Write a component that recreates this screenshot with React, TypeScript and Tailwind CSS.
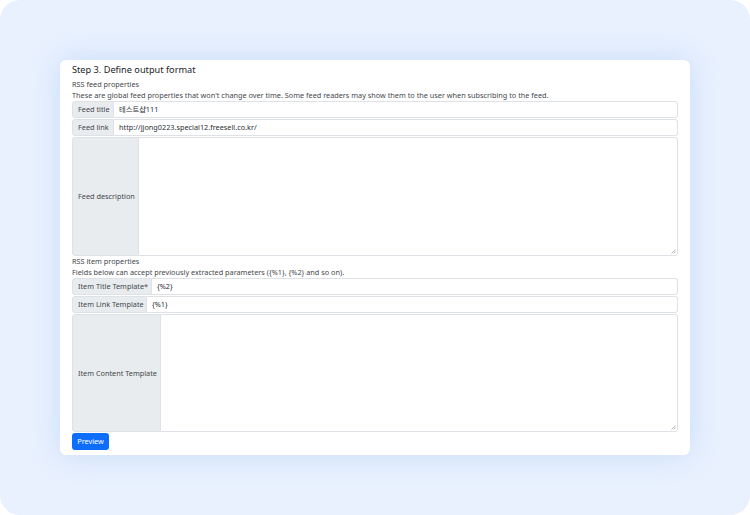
import React from "react";

const font = { fontFamily: '"Noto Sans", "Noto Sans CJK KR", sans-serif' };

function Row({ label, value, labelW }: { label: string; value: string; labelW: string }) {
  return (
    <div className="flex h-[17px] mb-[1px]">
      <div className={`${labelW} shrink-0 flex items-center px-[5px] bg-[#e9ecef] border border-[#dee2e6] rounded-l-[3px] text-[#43484d] text-[7.3px] whitespace-nowrap`}>
        {label}
      </div>
      <div className="flex-1 flex items-center px-[5px] border border-l-0 border-[#dee2e6] rounded-r-[3px] bg-white text-[#2a2f34] text-[7.3px]">
        {value}
      </div>
    </div>
  );
}

function AreaRow({ label, labelW, h }: { label: string; labelW: string; h: string }) {
  return (
    <div className={`flex ${h}`}>
      <div className={`${labelW} shrink-0 flex items-center px-[5px] bg-[#e9ecef] border border-[#dee2e6] rounded-l-[3px] text-[#43484d] text-[7.3px] whitespace-nowrap`}>
        {label}
      </div>
      <div className="flex-1 relative border border-l-0 border-[#dee2e6] rounded-r-[3px] bg-white">
        <svg className="absolute right-[1px] bottom-[1px]" width="5" height="5" viewBox="0 0 5 5">
          <path d="M4.5 0.5 L0.5 4.5 M4.5 2.5 L2.5 4.5" stroke="#999" strokeWidth="0.7" />
        </svg>
      </div>
    </div>
  );
}

export default function App() {
  return (
    <div className="w-[750px] h-[515px] bg-white" style={font}>
      <div className="w-full h-full rounded-[20px] bg-[#e9f1fe] pt-[60px] px-[60px]">
        <div className="bg-white rounded-[6px] shadow-[0_0_30px_rgba(160,195,245,0.45)] px-[12px] pt-[3px] h-[395px]">
          <div className="text-[9.2px] text-[#212529] leading-[13px] mb-[3px]">Step 3. Define output format</div>
          <div className="text-[7.3px] text-[#43484d] leading-[11px]">RSS feed properties</div>
          <div className="text-[7.3px] text-[#43484d] leading-[11px]">
            These are global feed properties that won't change over time. Some feed readers may show them to the user when subscribing to the feed.
          </div>
          <Row label="Feed title" value="테스트샵111" labelW="w-[42px]" />
          <Row label="Feed link" value="http://jjong0223.special12.freesell.co.kr/" labelW="w-[42px]" />
          <AreaRow label="Feed description" labelW="w-[67px]" h="h-[119px]" />
          <div className="text-[7.3px] text-[#43484d] leading-[11px]">RSS item properties</div>
          <div className="text-[7.3px] text-[#43484d] leading-[11px]">
            Fields below can accept previously extracted parameters ({"{%1}"}, {"{%2}"} and so on).
          </div>
          <Row label="Item Title Template*" value="{%2}" labelW="w-[80px]" />
          <Row label="Item Link Template" value="{%1}" labelW="w-[75px]" />
          <AreaRow label="Item Content Template" labelW="w-[89px]" h="h-[118px]" />
          <button className="mt-[1px] h-[17px] w-[37px] bg-[#0d6efd] text-white text-[7.3px] rounded-[3px] flex items-center justify-center">
            Preview
          </button>
        </div>
      </div>
    </div>
  );
}
